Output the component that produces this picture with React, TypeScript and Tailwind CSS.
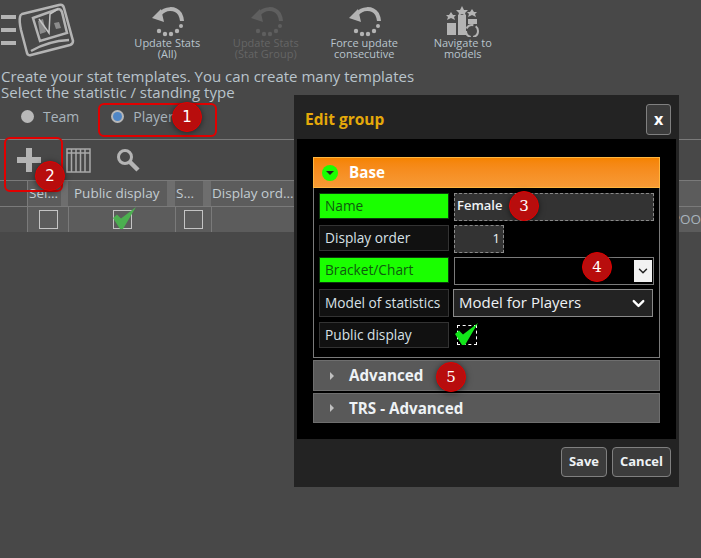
import React from 'react';
import { ChevronDown } from 'lucide-react';

const font = "font-['Open_Sans','Noto_Sans',sans-serif]";

function RefreshIcon({ dim }: { dim?: boolean }) {
  const color = dim ? '#5f5f5f' : '#b4b4b4';
  return (
    <svg width="34" height="31" viewBox="0 0 34 31" fill="none">
      <path d="M10 8 C15 2 25 1 30 8 C31 10 32 12 32 15" stroke={color} strokeWidth="4" />
      <path d="M2 12 L11 3 L14 16 Z" fill={color} />
      <g fill={color}>
        <circle cx="31" cy="20" r="2" />
        <circle cx="27" cy="25" r="2.2" />
        <circle cx="21" cy="28" r="2.2" />
        <circle cx="15" cy="28" r="2.2" />
        <circle cx="9" cy="25" r="2.2" />
      </g>
    </svg>
  );
}

function PodiumIcon() {
  return (
    <svg width="34" height="31" viewBox="0 0 34 31" fill="#b4b4b4">
      <rect x="1" y="17" width="9" height="12" />
      <rect x="12" y="9" width="8" height="20" />
      <rect x="22" y="13" width="9" height="5" />
      <polygon points="16,0 18,4 22,4 19,7 20,10 16,8 12,10 13,7 10,4 14,4" />
      <polygon points="5,6 7,9 10,9 8,11 9,14 5,12 1,14 2,11 0,9 3,9" />
      <polygon points="26,3 28,6 31,6 29,8 30,11 26,9 22,11 23,8 21,6 24,6" />
      <circle cx="26" cy="25" r="6" fill="#484848" stroke="#b4b4b4" strokeWidth="2" strokeDasharray="8 2.5" />
    </svg>
  );
}

function Logo() {
  return (
    <svg width="76" height="58" viewBox="0 0 76 58" fill="none">
      <g fill="#b4b4b4">
        <rect x="1" y="14" width="15" height="4" />
        <rect x="1" y="27" width="15" height="4" />
        <rect x="1" y="40" width="15" height="4" />
      </g>
      <path d="M22 13 L59 4 Q63 3 64 7 L73 40 Q73 43 70 44 L31 54 Q28 55 27 52 L21 29 Q19 20 20 16 Q20 14 22 13 Z" stroke="#b4b4b4" strokeWidth="2.5" />
      <path d="M33 17 L58 8 Q61 8 62 11 L67 32 L40 40 Z" stroke="#b4b4b4" strokeWidth="2.5" />
      <path d="M40 33 L38 20 L43 18 L46 31 Z M56 28 L54 22 L59 21 L61 27 Z" fill="#8c8c8c" />
      <path d="M39 18 L49 32 L50 13 L58 8" stroke="#c4c4c4" strokeWidth="1.5" />
      <path d="M31 50 Q48 40 69 39" stroke="#b4b4b4" strokeWidth="2.5" />
    </svg>
  );
}

function CheckMark({ color, className }: { color: string; className: string }) {
  return (
    <svg className={className} width="23" height="22" viewBox="0 0 23 22">
      <path d="M0 11 L4 7.5 L8 11.5 L23 0 L10 22 L7 22 Z" fill={color} />
    </svg>
  );
}

function ToolButton({ label, icon, dim }: { label: [string, string]; icon: React.ReactNode; dim?: boolean }) {
  return (
    <div className="flex w-[98.5px] flex-col items-center">
      {icon}
      <div className={`text-center text-[11px] leading-[11px] ${dim ? 'text-[#656565]' : 'text-[#b9c4cc]'}`}>
        {label[0]}
        <br />
        {label[1]}
      </div>
    </div>
  );
}

function Badge({ n, serif, className }: { n: number; serif?: boolean; className: string }) {
  return (
    <div
      className={`absolute flex h-[30px] w-[30px] items-center justify-center rounded-full border border-[#e00000] bg-[#b80d0d] text-[15px] text-white shadow-[0_1px_6px_rgba(0,0,0,0.5)] ${
        serif ? "font-['DejaVu_Serif',serif]" : "font-['DejaVu_Sans',sans-serif]"
      } ${className}`}
    >
      {n}
    </div>
  );
}

function FieldLabel({ text, green, tall }: { text: string; green?: boolean; tall?: boolean }) {
  return (
    <div
      className={`flex w-[130px] shrink-0 items-center border px-[5px] text-[13.7px] ${tall ? 'h-[28px]' : 'h-[26px]'} ${
        green ? 'border-[#0c3a0c] bg-[#1aff00] text-[#0f5a0f]' : 'border-[#333333] bg-[#111111] text-[#d8e0e6]'
      }`}
    >
      {text}
    </div>
  );
}

function AccordionBar({ text, className }: { text: string; className: string }) {
  return (
    <div className={`flex items-center border border-[#6e6e6e] bg-[#595959] text-[15.2px] font-bold text-[#eef2f5] ${className}`}>
      <span className="ml-[16px] mr-[15px] h-0 w-0 border-y-[4px] border-l-[4px] border-y-transparent border-l-[#c0c0c0]" />
      {text}
    </div>
  );
}

export default function App() {
  return (
    <div className={`relative h-[558px] w-[701px] overflow-hidden bg-[#484848] ${font}`}>
      <div className="flex h-[68px] items-start">
        <div className="w-[118px] pt-[1px]">
          <Logo />
        </div>
        <div className="flex pt-[6px]">
          <ToolButton label={['Update Stats', '(All)']} icon={<RefreshIcon />} />
          <ToolButton dim label={['Update Stats', '(Stat Group)']} icon={<RefreshIcon dim />} />
          <ToolButton label={['Force update', 'consecutive']} icon={<RefreshIcon />} />
          <ToolButton label={['Navigate to', 'models']} icon={<PodiumIcon />} />
        </div>
      </div>

      <div className="pl-[1px] text-[15px] leading-[16px] text-[#b9c4cc]">
        <div>Create your stat templates. You can create many templates</div>
        <div>Select the statistic / standing type</div>
      </div>

      <div className="mt-[4px] flex h-[24px] items-center text-[14px] text-[#a9b4bc]">
        <span className="ml-[21px] h-[13px] w-[13px] rounded-full bg-[#b8b8b8]" />
        <span className="ml-[9px]">Team</span>
        <span className="ml-[32px] flex h-[13px] w-[13px] items-center justify-center rounded-full bg-[#b8b8b8]">
          <span className="h-[9px] w-[9px] rounded-full bg-[#4f86c6]" />
        </span>
        <span className="ml-[9px]">Player</span>
      </div>

      {/* grid */}
      <div className="mt-[11px] border-t border-[#7a7a7a]">
        <div className="flex h-[40px] items-center">
          <svg className="ml-[17px]" width="24" height="24" viewBox="0 0 24 24" fill="#b4b4b4">
            <rect x="9" y="0" width="6" height="24" />
            <rect x="0" y="9" width="24" height="6" />
          </svg>
          <svg className="ml-[25px]" width="25" height="25" viewBox="0 0 25 25" fill="none" stroke="#a8a8a8" strokeWidth="1.5">
            <rect x="1" y="1" width="23" height="23" />
            <path d="M1 5 H24 M5.5 1 V24 M10 1 V24 M14.5 1 V24 M19 1 V24" />
          </svg>
          <svg className="ml-[25px]" width="24" height="24" viewBox="0 0 24 24" fill="none" stroke="#b4b4b4">
            <circle cx="9" cy="9" r="6.5" strokeWidth="3" />
            <path d="M13.5 13.5 L22 22" strokeWidth="4.5" />
          </svg>
        </div>
        <div className="flex h-[27px] border-y border-[#7a7a7a] bg-[#5c5c5c] text-[13.5px] text-[#c3ccd2]">
          <div className="w-[27px] bg-[#4e4e4e]" />
          <div className="flex w-[41px] items-center overflow-hidden border-l border-[#7a7a7a] pl-[1px]">
            <span className="w-[32px] shrink-0">Sel...</span>
            <span className="h-full w-[8px] shrink-0 bg-[#6e6e6e]" />
          </div>
          <div className="flex w-[107px] items-center pl-[6px]">
            <span className="w-[93px] shrink-0">Public display</span>
            <span className="h-full w-[8px] shrink-0 bg-[#6e6e6e]" />
          </div>
          <div className="flex w-[36px] items-center pl-[1px]">
            <span className="w-[27px] shrink-0">S...</span>
            <span className="h-full w-[8px] shrink-0 bg-[#6e6e6e]" />
          </div>
          <div className="flex flex-1 items-center pl-[1px]">Display ord...</div>
        </div>
        <div className="flex h-[25px] bg-[#5c5c5c] text-[13.5px]">
          <div className="w-[27px] bg-[#505050]" />
          <div className="flex w-[41px] items-center justify-center border-l border-[#7a7a7a]">
            <span className="h-[19px] w-[19px] border border-[#c4c4c4]" />
          </div>
          <div className="relative flex w-[107px] items-center justify-center border-l border-[#7a7a7a]">
            <span className="h-[19px] w-[19px] border border-[#c4c4c4]" />
            <CheckMark color="#4caf50" className="absolute left-[44px] top-0" />
          </div>
          <div className="flex w-[36px] items-center justify-center border-l border-[#7a7a7a]">
            <span className="h-[19px] w-[19px] border border-[#c4c4c4]" />
          </div>
          <div className="flex flex-1 items-center justify-end overflow-hidden border-l border-[#7a7a7a] text-[#a9b4bc]">POO</div>
        </div>
      </div>

      {/* modal */}
      <div className="absolute left-[294px] top-[95px] h-[392px] w-[385px] bg-[#232323]">
        <div className="flex h-[44px] items-center justify-between pl-[11px] pr-[8px]">
          <span className="pt-[5px] text-[15.5px] font-bold text-[#e5a90a]">Edit group</span>
          <span className="mt-[4px] flex h-[31px] w-[25px] items-center justify-center rounded-[3px] border border-[#808080] bg-[#3c3c3c] text-[16px] font-bold text-white">
            x
          </span>
        </div>
        <div className="ml-[3px] h-[300px] w-[379px] bg-black px-[16px] pt-[18px]">
          <div className="flex h-[31px] items-center border border-[#ffb640] bg-gradient-to-b from-[#f58300] to-[#f79a35] text-[15.2px] font-bold text-white">
            <span className="ml-[8px] mr-[11px] flex h-[16px] w-[16px] items-center justify-center rounded-full bg-[#1aff00]">
              <span className="h-0 w-0 border-x-[4px] border-t-[4px] border-x-transparent border-t-[#222222]" />
            </span>
            Base
          </div>
          <div className="flex h-[170px] flex-col gap-[4px] border-x border-b border-[#7a7a7a] px-[5px] pt-[5px]">
            <div className="flex gap-[5px]">
              <FieldLabel text="Name" green />
              <div className="flex h-[28px] w-[200px] items-center border border-dashed border-[#8a8a8a] bg-[#333333] pb-[2px] pl-[2px] text-[13px] font-semibold text-[#eef2f5]">
                Female
              </div>
            </div>
            <div className="flex gap-[5px]">
              <FieldLabel text="Display order" />
              <div className="flex h-[28px] w-[50px] items-center justify-end border border-dashed border-[#8a8a8a] bg-[#333333] pr-[3px] text-[13px] text-[#eef2f5]">
                1
              </div>
            </div>
            <div className="flex gap-[5px]">
              <FieldLabel text="Bracket/Chart" green />
              <div className="flex h-[28px] w-[200px] items-center justify-end border border-[#7a7a7a] bg-black pr-[1px]">
                <span className="flex h-[22px] w-[18px] items-center justify-center bg-[#f2f2f2]">
                  <ChevronDown className="text-[#222222]" size={14} strokeWidth={2.5} />
                </span>
              </div>
            </div>
            <div className="flex gap-[4px]">
              <FieldLabel text="Model of statistics" tall />
              <div className="flex h-[28px] w-[200px] items-center justify-between border border-[#8a8a8a] bg-[#232323] pb-[2px] pl-[5px] pr-[4px] text-[15px] text-[#eef2f5]">
                Model for Players
                <ChevronDown className="mt-[3px] text-white" size={19} strokeWidth={3} />
              </div>
            </div>
            <div className="mt-[1px] flex gap-[8px]">
              <FieldLabel text="Public display" />
              <div className="relative mt-[3px] h-[20px] w-[20px] border border-dashed border-white">
                <CheckMark color="#12e61a" className="absolute -left-[3px] -top-[3px]" />
              </div>
            </div>
          </div>
          <div className="mt-[2px] flex flex-col gap-[2px]">
            <AccordionBar text="Advanced" className="h-[31px]" />
            <AccordionBar text="TRS - Advanced" className="h-[30px]" />
          </div>
        </div>
        <div className="flex justify-end gap-[5px] pr-[8px] pt-[8px]">
          <span className="flex h-[30px] w-[46px] items-center justify-center rounded-[4px] border border-[#808080] bg-[#3c3c3c] text-[13px] font-bold text-[#eef2f5]">
            Save
          </span>
          <span className="flex h-[30px] w-[59px] items-center justify-center rounded-[4px] border border-[#808080] bg-[#3c3c3c] text-[13px] font-bold text-[#eef2f5]">
            Cancel
          </span>
        </div>
      </div>

      {/* tutorial annotations */}
      <div className="absolute left-[98px] top-[103px] h-[34px] w-[119px] rounded-[6px] border-2 border-[#e00000]" />
      <div className="absolute left-[4px] top-[137px] h-[55px] w-[59px] rounded-[6px] border-2 border-[#e00000]" />
      <Badge n={1} className="left-[172px] top-[102px]" />
      <Badge n={2} className="left-[35px] top-[161px]" />
      <Badge n={3} serif className="left-[509px] top-[191px]" />
      <Badge n={4} serif className="left-[582px] top-[252px]" />
      <Badge n={5} serif className="left-[436px] top-[362px]" />
    </div>
  );
}
